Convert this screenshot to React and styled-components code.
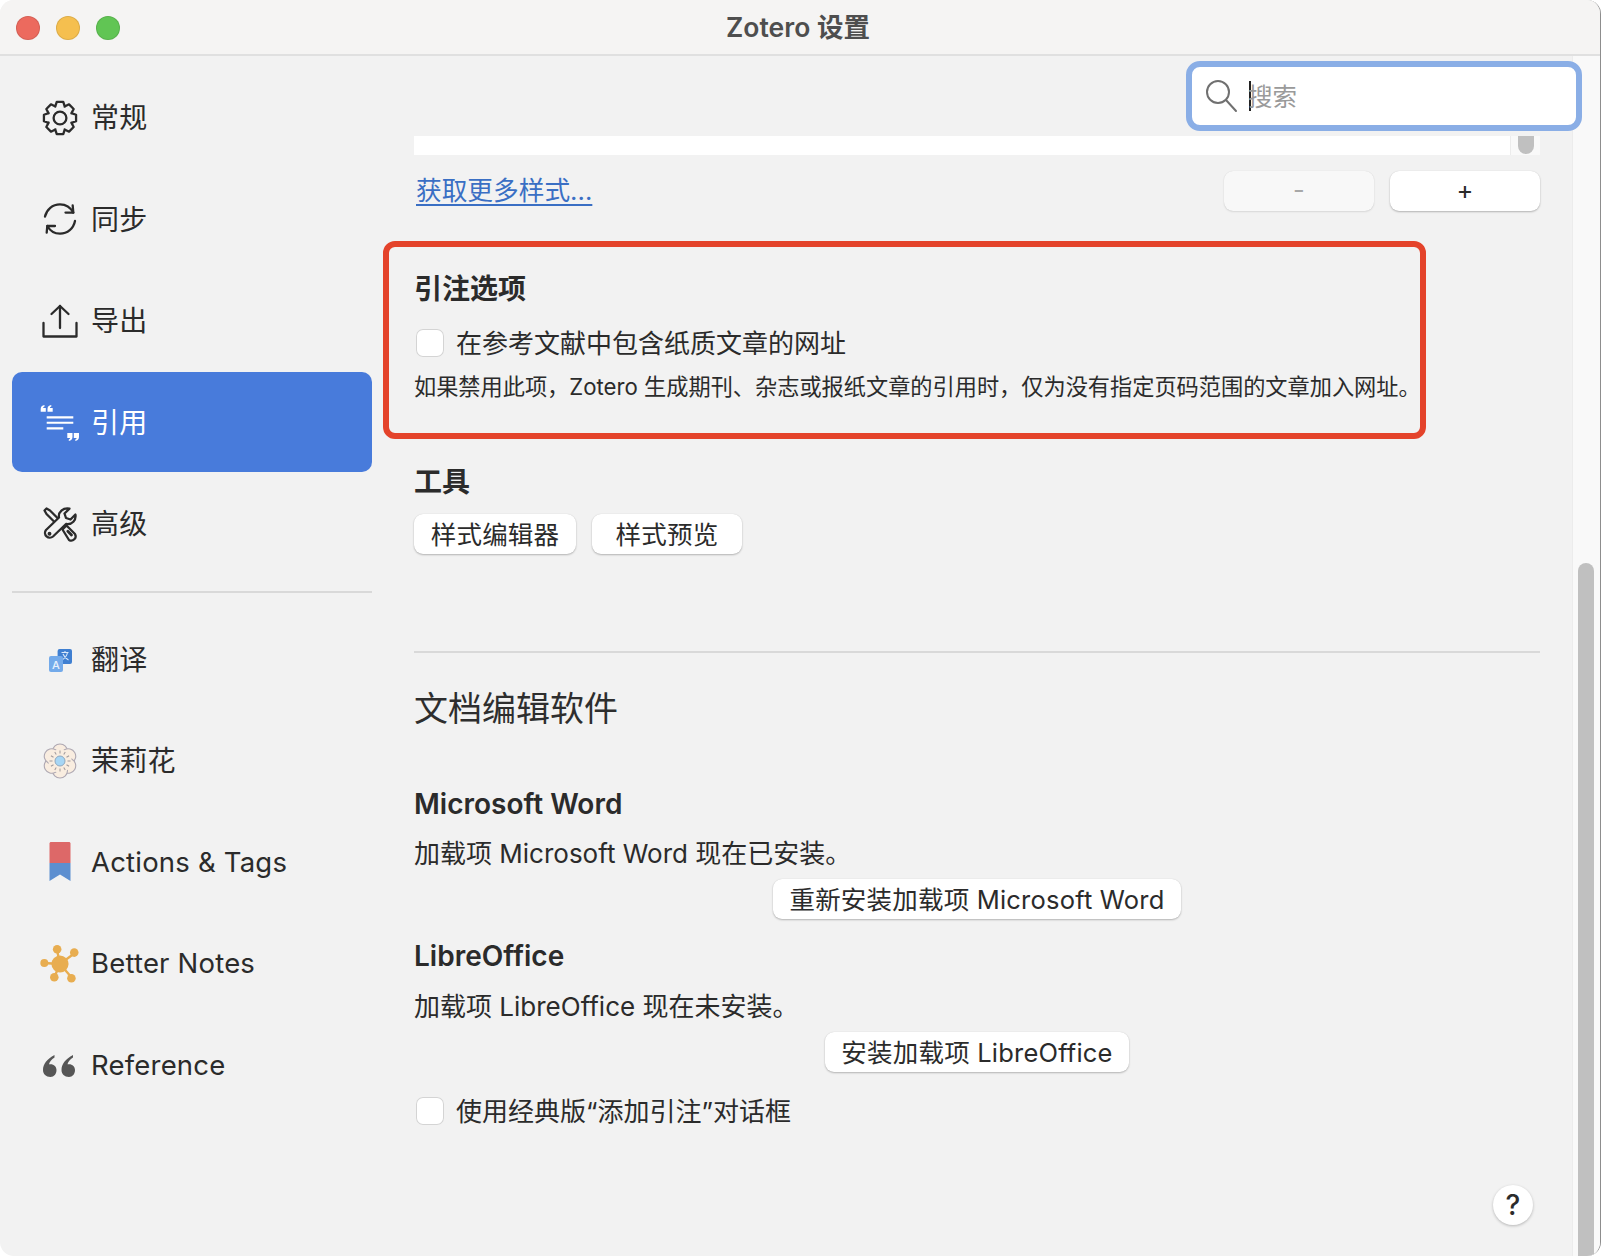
import React from 'react';
import styled, { createGlobalStyle } from 'styled-components';

const FONT = `Inter, "Noto Sans CJK SC", sans-serif`;

const GlobalStyle = createGlobalStyle`
  html, body {
    margin: 0;
    padding: 0;
    background: #fff;
  }
  * {
    box-sizing: border-box;
  }
`;

const Page = styled.div`
  width: 1602px;
  height: 1256px;
  overflow: hidden;
  font-family: ${FONT};
  color: #2b2b2b;
`;

const Window = styled.div`
  width: 1601px;
  height: 1256px;
  display: flex;
  flex-direction: column;
  background: #f2f2f2;
  border-right: 1px solid #8d8d8d;
  border-radius: 14px;
  overflow: hidden;
`;

const TitleBar = styled.div`
  height: 56px;
  flex: none;
  display: flex;
  align-items: center;
  justify-content: center;
  position: relative;
  padding: 0 4px 4px 0;
  background: #f5f4f3;
  border-bottom: 2px solid #e0e0e0;
  font-size: 26.5px;
  font-weight: 600;
  color: #4e4e4e;
`;

const Lights = styled.div`
  position: absolute;
  left: 16px;
  top: 16px;
  display: flex;
  gap: 16px;
`;

const Light = styled.span`
  width: 24px;
  height: 24px;
  border-radius: 50%;
  background: ${({ $color }) => $color};
  box-shadow: inset 0 0 0 1px rgba(0, 0, 0, 0.1);
`;

const Body = styled.div`
  flex: 1;
  min-height: 0;
  display: flex;
  position: relative;
`;

const Sidebar = styled.nav`
  width: 384px;
  flex: none;
  padding: 11.5px 12px 0;
  display: flex;
  flex-direction: column;
`;

const NavGroup = styled.div`
  display: flex;
  flex-direction: column;
  gap: 1.5px;
`;

const NavItem = styled.div`
  height: 100px;
  display: flex;
  align-items: center;
  gap: 13px;
  padding-left: 30px;
  border-radius: 10px;
  font-size: 27.5px;
  letter-spacing: 0.2px;
  background: ${({ $active }) => ($active ? '#487bdb' : 'transparent')};
  color: ${({ $active }) => ($active ? '#fff' : '#2b2b2b')};
`;

const NavLabel = styled.span`
  font-size: ${({ $cjk }) => ($cjk ? '28px' : '27.5px')};
  padding-bottom: ${({ $cjk }) => ($cjk ? '3px' : '1px')};
`;

const NavIcon = styled.svg`
  width: ${({ $size }) => $size || 36}px;
  height: ${({ $size }) => $size || 36}px;
  margin: 0 ${({ $size }) => (36 - ($size || 36)) / 2}px;
  flex: none;
  overflow: visible;
`;

const Divider = styled.div`
  height: 2px;
  margin: 17.5px 0 16px;
  background: #d9d9d9;
`;

const Main = styled.main`
  flex: 1;
  min-width: 0;
  padding: 80px 32px 0 30px;
`;

const ListEnd = styled.div`
  height: 19px;
  display: flex;
  background: #fff;
`;

const ListFill = styled.div`
  flex: 1;
`;

const ListGutter = styled.div`
  width: 30px;
  display: flex;
  justify-content: center;
  background: #f9f9f9;
  border-left: 1px solid #ececec;
`;

const ListThumb = styled.div`
  width: 16px;
  height: 18px;
  margin-left: 1px;
  border-radius: 0 0 8px 8px;
  background: #c0c0c0;
`;

const StyleActions = styled.div`
  display: flex;
  align-items: center;
  margin-top: 16px;
  gap: 16px;
`;

const MoreLink = styled.a`
  flex: 1;
  padding-left: 2px;
  font-size: 25.7px;
  line-height: 40px;
  color: #3a6fc4;
  text-decoration: underline;
  text-underline-offset: 4px;
`;

const Button = styled.div`
  height: 40px;
  display: flex;
  align-items: center;
  justify-content: center;
  width: ${({ $width }) => ($width ? `${$width}px` : 'auto')};
  padding: 0 16px 3px;
  border-radius: 9px;
  font-size: 25.5px;
  letter-spacing: 0.2px;
  white-space: nowrap;
  background: ${({ $disabled }) => ($disabled ? '#f8f8f8' : '#fff')};
  color: ${({ $disabled }) => ($disabled ? '#a8a8a8' : '#2b2b2b')};
  box-shadow: 0 1px 2px rgba(0, 0, 0, ${({ $disabled }) => ($disabled ? 0.1 : 0.25)}), 0 0 1px rgba(0, 0, 0, 0.12);
`;

const HighlightBox = styled.section`
  width: 1043px;
  height: 198px;
  margin: 30px 0 0 -31px;
  padding: 24px 0 0 25px;
  border: 6px solid #e4432b;
  border-radius: 12px;
`;

const Heading = styled.h3`
  margin: ${({ $top }) => $top || 0}px 0 0;
  font-size: 28px;
  line-height: 36px;
  font-weight: 600;
  color: #2b2b2b;
`;

const CheckRow = styled.label`
  height: 30px;
  display: flex;
  align-items: center;
  gap: 12px;
  padding-left: 2px;
  margin-top: ${({ $top }) => $top}px;
  font-size: 26px;
`;

const CheckLabel = styled.span`
  padding-bottom: 3px;
`;

const CheckBox = styled.span`
  width: 28px;
  height: 28px;
  flex: none;
  border-radius: 7px;
  background: #fff;
  box-shadow: inset 0 0 0 1px #d4d4d4;
`;

const Note = styled.p`
  margin: 14px 0 0;
  font-size: 22.2px;
  line-height: 30px;
  white-space: nowrap;
`;

const ToolRow = styled.div`
  display: flex;
  gap: 16px;
  margin-top: 14px;
`;

const Rule = styled.hr`
  height: 2px;
  margin: 97px 0 0;
  border: 0;
  background: #d9d9d9;
`;

const SectionTitle = styled.h2`
  margin: 33px 0 0;
  font-size: 34px;
  line-height: 46px;
  font-weight: 400;
  color: #2e2e2e;
`;

const Para = styled.p`
  margin: ${({ $top }) => $top}px 0 0;
  font-size: 26px;
  line-height: 34px;
`;

const CenterRow = styled.div`
  display: flex;
  justify-content: center;
  margin-top: 8px;
`;

const Track = styled.div`
  width: 28px;
  flex: none;
  padding: 507px 6px 0 5px;
  background: #f9f9f9;
  border-left: 1px solid #ececec;
`;

const Thumb = styled.div`
  height: 100%;
  border-radius: 8px 8px 0 0;
  background: #c0c0c0;
`;

const Search = styled.div`
  position: absolute;
  top: 5px;
  right: 18px;
  width: 396px;
  height: 70px;
  display: flex;
  align-items: center;
  padding-left: 12px;
  background: #fff;
  border: 6px solid #8aaee6;
  border-radius: 14px;
`;

const Caret = styled.span`
  width: 2px;
  height: 30px;
  margin: 0 -3px 0 11px;
  background: #222;
`;

const Placeholder = styled.span`
  font-size: 24.5px;
  color: #9a9a9a;
  padding-bottom: 2px;
`;

const HelpButton = styled.div`
  position: absolute;
  right: 67px;
  top: 1129px;
  width: 40px;
  height: 40px;
  display: flex;
  align-items: center;
  justify-content: center;
  border-radius: 50%;
  background: #fff;
  box-shadow: 0 1px 3px rgba(0, 0, 0, 0.25);
  font-size: 28px;
  font-weight: 500;
  color: #2b2b2b;
`;

// 8 tooth cog outline around the centre of a 36 box
const cogPath = () => {
  const pts = [];
  for (let i = 0; i < 8; i++) {
    const a = (i * Math.PI) / 4 - Math.PI / 2;
    [[-0.4, 12.3], [-0.2, 16.4], [0.2, 16.4], [0.4, 12.3]].forEach(([da, r]) => {
      pts.push(`${(18 + r * Math.cos(a + da)).toFixed(2)} ${(18 + r * Math.sin(a + da)).toFixed(2)}`);
    });
  }
  return `M${pts.join('L')}Z`;
};

const lineProps = {
  fill: 'none',
  stroke: 'currentColor',
  strokeWidth: 2.3,
  strokeLinecap: 'round',
  strokeLinejoin: 'round',
};

const GearIcon = () => (
  <NavIcon viewBox="0 0 36 36" {...lineProps}>
    <path d={cogPath()} />
    <circle cx="18" cy="18" r="6.4" />
  </NavIcon>
);

const SyncIcon = () => (
  <NavIcon viewBox="0 0 36 36" {...lineProps}>
    <path d="M3 15.600C4.500 8.500 10.500 3.300 18 3.300c5.500 0 10.500 3 13.300 8.300" />
    <path d="M30.700 4.500 31.300 11.600H23.500" />
    <path d="M33 20C31.500 27.500 25.500 32.700 18 32.700c-5.500 0-10-3-12.700-7.700" />
    <path d="M4.700 31.600 5.300 25H13" />
  </NavIcon>
);

const ExportIcon = () => (
  <NavIcon viewBox="0 0 36 36" {...lineProps}>
    <path d="M18 25V3" />
    <path d="M9.500 11 18 3l8.500 8" />
    <path d="M1.500 20v13.500h33V20" />
  </NavIcon>
);

const CiteIcon = () => (
  <NavIcon viewBox="0 0 40 40" $size={40} fill="currentColor">
    <path d="M.7 7C.7 5 2 3.300 4.500 3v1.500C3.700 4.800 3.200 5.300 3 6H5.800V9.700H.7ZM7.500 7C7.500 5 8.800 3.300 11.300 3v1.500C10.500 4.800 10 5.300 9.800 6H12.700V9.700H7.500Z" />
    <path d="M6.700 14.300H33.300V16.400H6.700ZM6.700 19.700H33.300V21.800H6.700ZM6.700 25.300H23.300V27.400H6.700Z" />
    <path d="M32.500 35C32.500 37 31 38.700 28.800 39V37.500C29.500 37.200 30 36.700 30.200 36H27.300V31H32.500ZM39 35C39 37 37.500 38.700 35.300 39V37.500C36 37.200 36.500 36.700 36.700 36H33.800V31H39Z" />
  </NavIcon>
);

const ToolsIcon = () => (
  <NavIcon viewBox="0 0 36 36" {...lineProps}>
    <path d="M27.500 2.600 22.500 7.500 24 12 28.500 13.500 33.400 8.500C34.500 14 30 19 24 18L11 30.500A4.800 4.800 0 0 1 4 24L17 11.500C16 6 21 1.500 27.500 2.600Z" />
    <path d="M12 15.500 4.500 8 2.500 4.500 4.500 2.500 8 4.500 15.500 12" />
    <path d="M20.500 23.500 24.500 19.500 33 28A4.400 4.400 0 0 1 27 34Z" />
    <path d="M25.800 25.200 29.500 29" strokeWidth="2.800" />
    <circle cx="7.500" cy="27.700" r=".8" fill="currentColor" />
  </NavIcon>
);

const TranslateIcon = () => (
  <NavIcon viewBox="0 0 36 36">
    <rect x="15.600" y="8" width="14.400" height="15" rx="2" fill="#3f7fd1" />
    <path d="M19.500 11.500h7M23 10v1.500M25.500 11.500c-.7 3.500-3 6-5.500 7.500M21 13c1 2.500 3 4.800 5.500 6" fill="none" stroke="#dbe9fa" strokeWidth="1.100" />
    <rect x="7" y="15" width="14" height="16" rx="2" fill="#73aaea" />
    <text x="14" y="27.500" textAnchor="middle" fontSize="11" fontFamily="Inter, sans-serif" fontWeight="500" fill="#e8f1fc">A</text>
  </NavIcon>
);

const FlowerIcon = () => (
  <NavIcon viewBox="0 0 36 36">
    {[0, 60, 120, 180, 240, 300].map((deg) => (
      <circle key={deg} cx="18" cy="8.500" r="7.500" fill="#f9ede0" stroke="#aea8b2" strokeWidth="1.100" transform={`rotate(${deg} 18 18)`} />
    ))}
    <circle cx="18" cy="18" r="11.500" fill="#f9ede0" />
    {[0, 30, 60, 90, 120, 150, 180, 210, 240, 270, 300, 330].map((deg) => (
      <path key={deg} d="M18 7.500v3" stroke="#a09a9c" strokeWidth="1" transform={`rotate(${deg} 18 18)`} />
    ))}
    <circle cx="18" cy="18" r="5" fill="#a6d6f5" stroke="#8fa8bf" strokeWidth="1" />
  </NavIcon>
);

const BookmarkIcon = () => (
  <NavIcon viewBox="0 0 40 40" $size={40}>
    <path d="M9.500 1.500c0-.8.700-1.500 1.500-1.500h18c.8 0 1.500.7 1.500 1.500V21h-21Z" fill="#dd6868" />
    <path d="M9.500 21h21v18L20 32.500 9.500 39Z" fill="#5d8fd0" />
  </NavIcon>
);

const NotesIcon = () => (
  <NavIcon viewBox="0 0 40 40" $size={38} fill="#e8ad50">
    <path d="M20 20 17 6M20 20 35 9M20 20 3 19M20 20 14 34M20 20 32 34" stroke="#e8ad50" strokeWidth="2.500" />
    <circle cx="20" cy="20" r="9" />
    <circle cx="17" cy="4.500" r="4.500" />
    <circle cx="35" cy="8" r="4.500" />
    <circle cx="3.500" cy="19" r="4.200" />
    <circle cx="14" cy="34" r="4.500" />
    <circle cx="32" cy="35" r="4.500" />
  </NavIcon>
);

const QuoteIcon = () => (
  <NavIcon viewBox="0 0 36 36" fill="#565656">
    <path d="M8.500 30c-4.500 0-7.500-3-7.500-7 0-6 4-11 11.500-15v2.500c-3 2-5 4.500-5.500 6.800 4.500-.8 7.500 2 7.500 5.700 0 4-2.500 7-6 7Z" />
    <path d="M27 30c-4.500 0-7.500-3-7.500-7 0-6 4-11 11.500-15v2.500c-3 2-5 4.500-5.500 6.800 4.500-.8 7.500 2 7.500 5.700 0 4-2.500 7-6 7Z" />
  </NavIcon>
);

const SearchIcon = () => (
  <svg width="34" height="34" viewBox="0 0 34 34" fill="none" stroke="#707070" strokeWidth="2" strokeLinecap="round">
    <circle cx="14" cy="13" r="11" />
    <path d="M22 21 32 32" />
  </svg>
);

const primaryNav = [
  { label: '常规', Icon: GearIcon, cjk: true },
  { label: '同步', Icon: SyncIcon, cjk: true },
  { label: '导出', Icon: ExportIcon, cjk: true },
  { label: '引用', Icon: CiteIcon, cjk: true, active: true },
  { label: '高级', Icon: ToolsIcon, cjk: true },
];

const pluginNav = [
  { label: '翻译', Icon: TranslateIcon, cjk: true },
  { label: '茉莉花', Icon: FlowerIcon, cjk: true },
  { label: 'Actions & Tags', Icon: BookmarkIcon },
  { label: 'Better Notes', Icon: NotesIcon },
  { label: 'Reference', Icon: QuoteIcon },
];

const renderNav = (items) => (
  <NavGroup>
    {items.map(({ label, Icon, active, cjk }) => (
      <NavItem key={label} $active={active}>
        <Icon />
        <NavLabel $cjk={cjk}>{label}</NavLabel>
      </NavItem>
    ))}
  </NavGroup>
);

const App = () => {
  return (
    <Page>
      <GlobalStyle />
      <Window>
        <TitleBar>
          <Lights>
            <Light $color="#ec6a5e" />
            <Light $color="#f5bf4f" />
            <Light $color="#61c554" />
          </Lights>
          Zotero 设置
        </TitleBar>
        <Body>
          <Sidebar>
            {renderNav(primaryNav)}
            <Divider />
            {renderNav(pluginNav)}
          </Sidebar>
          <Main>
            <ListEnd>
              <ListFill />
              <ListGutter>
                <ListThumb />
              </ListGutter>
            </ListEnd>
            <StyleActions>
              <MoreLink>获取更多样式...</MoreLink>
              <Button $width={150} $disabled>-</Button>
              <Button $width={150}>+</Button>
            </StyleActions>

            <HighlightBox>
              <Heading>引注选项</Heading>
              <CheckRow $top={21}>
                <CheckBox />
                <CheckLabel>在参考文献中包含纸质文章的网址</CheckLabel>
              </CheckRow>
              <Note>如果禁用此项，Zotero 生成期刊、杂志或报纸文章的引用时，仅为没有指定页码范围的文章加入网址。</Note>
            </HighlightBox>

            <Heading $top={25}>工具</Heading>
            <ToolRow>
              <Button $width={162}>样式编辑器</Button>
              <Button $width={150}>样式预览</Button>
            </ToolRow>

            <Rule />
            <SectionTitle>文档编辑软件</SectionTitle>

            <Heading $top={54}>Microsoft Word</Heading>
            <Para $top={15}>加载项 Microsoft Word 现在已安装。</Para>
            <CenterRow>
              <Button>重新安装加载项 Microsoft Word</Button>
            </CenterRow>

            <Heading $top={19}>LibreOffice</Heading>
            <Para $top={16}>加载项 LibreOffice 现在未安装。</Para>
            <CenterRow>
              <Button>安装加载项 LibreOffice</Button>
            </CenterRow>

            <CheckRow $top={24}>
              <CheckBox />
              <CheckLabel>使用经典版“添加引注”对话框</CheckLabel>
            </CheckRow>
          </Main>
          <Track>
            <Thumb />
          </Track>
          <Search>
            <SearchIcon />
            <Caret />
            <Placeholder>搜索</Placeholder>
          </Search>
          <HelpButton>?</HelpButton>
        </Body>
      </Window>
    </Page>
  );
};

export default App;
